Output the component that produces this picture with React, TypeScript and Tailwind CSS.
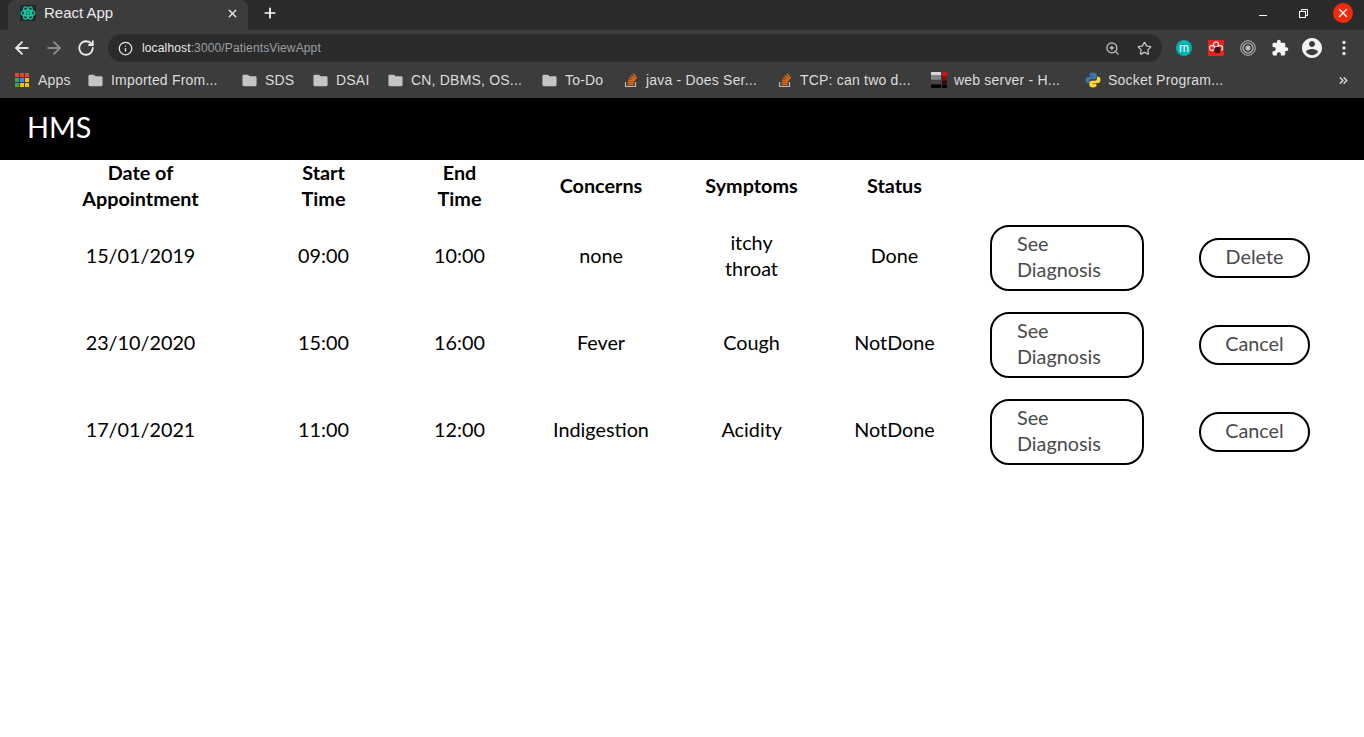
import React from 'react';
import { ArrowLeft, ArrowRight, RotateCw, Info, ZoomIn, Star, X, Plus, ChevronsRight } from 'lucide-react';

type Bookmark = { label: string; icon: 'folder' | 'so' | 'sf' | 'py'; width: string };

const bookmarks: Bookmark[] = [
    { label: 'Imported From...', icon: 'folder', width: 'w-[154px]' },
    { label: 'SDS', icon: 'folder', width: 'w-[71px]' },
    { label: 'DSAI', icon: 'folder', width: 'w-[75px]' },
    { label: 'CN, DBMS, OS...', icon: 'folder', width: 'w-[154px]' },
    { label: 'To-Do', icon: 'folder', width: 'w-[82px]' },
    { label: 'java - Does Ser...', icon: 'so', width: 'w-[154px]' },
    { label: 'TCP: can two d...', icon: 'so', width: 'w-[154px]' },
    { label: 'web server - H...', icon: 'sf', width: 'w-[154px]' },
    { label: 'Socket Program...', icon: 'py', width: 'w-[154px]' },
];

const appointments = [
    { date: '15/01/2019', start: '09:00', end: '10:00', concerns: 'none', symptoms: 'itchy throat', status: 'Done', action: 'Delete' },
    { date: '23/10/2020', start: '15:00', end: '16:00', concerns: 'Fever', symptoms: 'Cough', status: 'NotDone', action: 'Cancel' },
    { date: '17/01/2021', start: '11:00', end: '12:00', concerns: 'Indigestion', symptoms: 'Acidity', status: 'NotDone', action: 'Cancel' },
];

const ReactLogo = () => (
    <svg width="16" height="16" viewBox="0 0 16 16" className="shrink-0 bg-[#20282e]">
        <g fill="none" stroke="#14c99f" strokeWidth="1.4">
            <ellipse cx="8" cy="8" rx="6.8" ry="2.8" />
            <ellipse cx="8" cy="8" rx="6.8" ry="2.8" transform="rotate(60 8 8)" />
            <ellipse cx="8" cy="8" rx="6.8" ry="2.8" transform="rotate(120 8 8)" />
        </g>
        <circle cx="8" cy="8" r="1.7" fill="#14c99f" />
    </svg>
);

const AppsIcon = () => (
    <svg width="14" height="14" viewBox="0 0 14 14">
        <path d="M0 0h4v4H0zM5 0h4v4H5zM10 0h4v4h-4z" fill="#ea4335" />
        <path d="M0 5h4v4H0z" fill="#34a853" /><path d="M5 5h4v4H5z" fill="#4285f4" /><path d="M10 5h4v4h-4z" fill="#fbbc05" />
        <path d="M0 10h4v4H0z" fill="#34a853" /><path d="M5 10h4v4H5z" fill="#fbbc05" /><path d="M10 10h4v4h-4z" fill="#fbbc05" />
    </svg>
);

const StackOverflowIcon = () => (
    <svg width="16" height="16" viewBox="0 0 16 16" fill="none">
        <path d="M2.5 10v4.5h10V10" stroke="#bcbbbb" strokeWidth="1.2" />
        <path d="M4.5 12.5h6M4.7 10.3l6 .6M5.2 8l5.9 1.4M6.3 5.7l5.4 2.8M8 3.6l4.6 3.8M10.2 1.6l3.4 4.8" stroke="#f26c12" strokeWidth="1.4" />
    </svg>
);

const ServerFaultIcon = () => (
    <svg width="16" height="16" viewBox="0 0 16 16">
        <path d="M0 0h10v3.5H0z" fill="#d8d8d8" /><path d="M11 0h5v3.5h-5z" fill="#e01010" />
        <path d="M0 4.2h10v3.5H0z" fill="#8a8a8a" /><path d="M11 4.2h5v3.5h-5z" fill="#8c0c0c" />
        <path d="M0 8.4h10v3.5H0z" fill="#444444" /><path d="M11 8.4h5v3.5h-5z" fill="#3c0808" />
        <path d="M0 12.5h10V16H0zM11 12.5h5V16h-5z" fill="#000000" />
    </svg>
);

const PythonIcon = () => (
    <svg width="16" height="16" viewBox="0 0 16 16">
        <path d="M8 .5c-3 0-3.5 1-3.5 2.2v1.800h3.700V5H2.800C1.400 5 .5 6 .5 8s.9 3.200 2.200 3.200H4V9.500c0-1.300 1-2.300 2.300-2.300h3.400c1.100 0 1.900-.9 1.900-2V2.700C11.600 1.400 10.500.5 8 .5z" fill="#3a77ab" />
        <path d="M8 15.500c3 0 3.500-1 3.500-2.200v-1.800H7.800V11h5.400c1.400 0 2.300-1 2.300-3s-.9-3.200-2.200-3.200H12v1.700c0 1.300-1 2.300-2.300 2.300H6.300c-1.100 0-1.900.9-1.900 2v2.500c0 1.300 1.100 2.200 3.600 2.200z" fill="#fdd23c" />
    </svg>
);

const FolderIcon = () => (
    <svg width="17" height="17" viewBox="0 0 24 24" fill="#c4c4c4">
        <path d="M10 4H4c-1.100 0-1.990.9-1.990 2L2 18c0 1.100.9 2 2 2h16c1.100 0 2-.9 2-2V8c0-1.100-.9-2-2-2h-8l-2-2z" />
    </svg>
);

const BookmarkIcon: React.FC<{ kind: Bookmark['icon'] }> = ({ kind }) => {
    if (kind === 'so') return <StackOverflowIcon />;
    if (kind === 'sf') return <ServerFaultIcon />;
    if (kind === 'py') return <PythonIcon />;
    return <FolderIcon />;
};

const BugExtension = () => (
    <svg width="16" height="16" viewBox="0 0 16 16" className="ml-[16px]">
        <rect width="16" height="16" fill="#e8211d" />
        <g fill="none" stroke="#f6d9d9" strokeWidth="1.3">
            <circle cx="8" cy="4.5" r="2.5" />
            <circle cx="4" cy="8" r="2.5" />
            <circle cx="12" cy="8" r="2.5" />
        </g>
        <circle cx="9.5" cy="10" r="3.3" fill="#3d1414" />
    </svg>
);

const PuzzleIcon = () => (
    <svg width="18" height="18" viewBox="0 0 24 24" fill="#f1f3f4" className="ml-[15px]">
        <path d="M20.500 11H19V7c0-1.100-.9-2-2-2h-4V3.500C13 2.120 11.880 1 10.500 1S8 2.120 8 3.500V5H4c-1.100 0-1.990.9-1.990 2v3.800H3.500c1.490 0 2.700 1.210 2.700 2.700s-1.210 2.700-2.700 2.700H2V20c0 1.100.9 2 2 2h3.800v-1.500c0-1.490 1.210-2.700 2.700-2.700 1.490 0 2.700 1.210 2.700 2.700V22H17c1.100 0 2-.9 2-2v-4h1.500c1.380 0 2.500-1.120 2.500-2.500S21.880 11 20.500 11z" />
    </svg>
);

const AccountIcon = () => (
    <svg width="24" height="24" viewBox="0 0 24 24" fill="#f1f3f4" className="ml-[11px]">
        <path d="M12 2C6.480 2 2 6.480 2 12s4.480 10 10 10 10-4.480 10-10S17.520 2 12 2zm0 3c1.660 0 3 1.340 3 3s-1.340 3-3 3-3-1.340-3-3 1.340-3 3-3zm0 14.200c-2.500 0-4.710-1.280-6-3.220.03-1.990 4-3.080 6-3.080 1.990 0 5.970 1.090 6 3.080-1.290 1.940-3.500 3.220-6 3.220z" />
    </svg>
);

const MoreIcon = () => (
    <svg width="20" height="20" viewBox="0 0 20 20" fill="#e8eaed" className="ml-[10px]">
        <circle cx="10" cy="4.5" r="1.7" /><circle cx="10" cy="10" r="1.7" /><circle cx="10" cy="15.5" r="1.7" />
    </svg>
);

const RestoreIcon = () => (
    <svg width="9" height="9" viewBox="0 0 9 9" fill="none" stroke="#ffffff" className="ml-[32px]">
        <path d="M2.5 2V.5h6v6H7" />
        <rect x=".5" y="2.5" width="6" height="6" />
    </svg>
);

const BrowserChrome: React.FC = () => (
    <div className="font-['Liberation_Sans',Arial,sans-serif] text-[#e8eaed]">
        <div className="flex h-[30px] bg-[#2b2b2b]">
            <div className="ml-[8px] flex h-full w-[240px] items-center rounded-t-[8px] bg-[#3c3c3c] pb-[4px] pl-[12px] pr-[9px]">
                <ReactLogo />
                <span className="ml-[8px] flex-1 text-[15px]">React App</span>
                <X size={13} strokeWidth={2.6} />
            </div>
            <div className="ml-[14px] flex h-full items-center pb-[4px] text-white">
                <Plus size={16} strokeWidth={2.6} />
            </div>
            <div className="ml-auto flex h-full items-center pb-[4px] pr-[11px]">
                <span className="mt-[4px] h-[1px] w-[8px] bg-white" />
                <RestoreIcon />
                <span className="ml-[25px] flex h-[20px] w-[20px] items-center justify-center rounded-full bg-[#f02a0a]">
                    <X size={14} strokeWidth={2.4} className="text-white" />
                </span>
            </div>
        </div>
        <div className="flex h-[36px] items-center bg-[#3c3c3c] pl-[12px]">
            <ArrowLeft size={20} strokeWidth={2.2} />
            <ArrowRight size={20} strokeWidth={2.2} className="ml-[12px] text-[#8a8b8c]" />
            <RotateCw size={18} strokeWidth={2.4} className="ml-[13px]" />
            <div className="ml-[13px] flex h-[28px] w-[1054px] items-center rounded-full bg-[#2b2b2b] pl-[10px] pr-[10px]">
                <Info size={15} strokeWidth={2} />
                <span className="ml-[9px] text-[12px] tracking-[0.14px]">localhost<span className="text-[#9aa0a6]">:3000/PatientsViewAppt</span></span>
                <ZoomIn size={15} className="ml-auto text-[#c4c7c9]" />
                <Star size={15} strokeWidth={2} className="ml-[17px] text-[#c4c7c9]" />
            </div>
            <div className="ml-[14px] flex h-[16px] w-[16px] items-center justify-center rounded-full bg-[#00b3b3] text-[12px] leading-none text-white">m</div>
            <BugExtension />
            <svg width="16" height="16" viewBox="0 0 16 16" fill="none" stroke="#bdbdbd" className="ml-[16px]">
                <circle cx="8" cy="8" r="7.3" /><circle cx="8" cy="8" r="5" strokeWidth="1.2" /><circle cx="8" cy="8" r="2.2" fill="#bdbdbd" />
            </svg>
            <PuzzleIcon />
            <AccountIcon />
            <MoreIcon />
        </div>
        <div className="flex h-[32px] items-center bg-[#3c3c3c] pb-[4px] pl-[15px] pr-[14px] text-[14px] tracking-[0.2px] text-[#dcdcdc]">
            <div className="flex w-[72px] items-center gap-[9px]">
                <AppsIcon />
                <span>Apps</span>
            </div>
            {bookmarks.map((b) => (
                <div key={b.label} className={`flex items-center gap-[7px] whitespace-nowrap ${b.width}`}>
                    <BookmarkIcon kind={b.icon} />
                    <span>{b.label}</span>
                </div>
            ))}
            <ChevronsRight size={13} strokeWidth={2.6} className="ml-auto" />
        </div>
    </div>
);

const PillButton: React.FC<{ label: string; wide?: boolean }> = ({ label, wide }) => (
    <button
        type="button"
        className={wide
            ? 'h-[66px] w-[154px] rounded-[19px] border-2 border-black bg-white pb-[4px] pl-[25px] pr-[25px] text-left text-[19.8px] leading-[26px] text-[#4a4a4a]'
            : 'h-[40px] w-[111px] rounded-[20px] border-2 border-black bg-white pb-[4px] text-center text-[19.8px] leading-[26px] text-[#4a4a4a]'}
    >
        {label}
    </button>
);

const thClass = 'text-center align-middle text-[19.8px] font-bold leading-[26px] text-black';
const tdClass = 'h-[87px] text-center align-middle text-[19.8px] leading-[26px] text-black';

const App: React.FC = () => {
    return (
        <div className="min-h-[737px] bg-white font-['Lato',sans-serif]">
            <BrowserChrome />
            <header className="flex h-[62px] items-center bg-black pb-[3px] pl-[27px] text-[28.8px] text-white">HMS</header>
            <div className="-mt-[1px] pl-[18px] pr-[38px]">
                <table className="w-full table-fixed border-collapse">
                    <colgroup>
                        <col className="w-[245px]" />
                        <col className="w-[121px]" />
                        <col className="w-[151px]" />
                        <col className="w-[132px]" />
                        <col className="w-[169px]" />
                        <col className="w-[117px]" />
                        <col className="w-[228px]" />
                        <col />
                    </colgroup>
                    <thead>
                        <tr>
                            <th className={thClass}>Date of<br />Appointment</th>
                            <th className={thClass}>Start<br />Time</th>
                            <th className={thClass}>End<br />Time</th>
                            <th className={thClass}>Concerns</th>
                            <th className={thClass}>Symptoms</th>
                            <th className={thClass}>Status</th>
                            <th />
                            <th />
                        </tr>
                    </thead>
                    <tbody>
                        {appointments.map((a) => (
                            <tr key={a.date}>
                                <td className={tdClass}>{a.date}</td>
                                <td className={tdClass}>{a.start}</td>
                                <td className={tdClass}>{a.end}</td>
                                <td className={tdClass}>{a.concerns}</td>
                                <td className={tdClass}><span className="mx-auto block w-[60px]">{a.symptoms}</span></td>
                                <td className={tdClass}>{a.status}</td>
                                <td className={tdClass}><div className="pt-[6px]"><PillButton label="See Diagnosis" wide /></div></td>
                                <td className={tdClass}><div className="ml-[2px] pt-[6px]"><PillButton label={a.action} /></div></td>
                            </tr>
                        ))}
                    </tbody>
                </table>
            </div>
        </div>
    );
};

export default App;
